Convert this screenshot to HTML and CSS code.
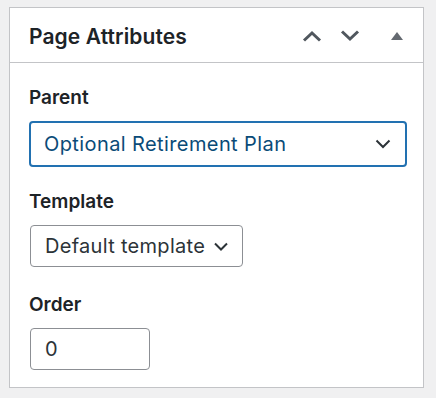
FILE: index.html
```html
<!DOCTYPE html>
<html lang="en">

<head>
    <meta charset="UTF-8">
    <meta name="viewport" content="width=device-width, initial-scale=1.0">
    <title>Page Attributes</title>
    <link rel="stylesheet" href="styles.css">
</head>

<body>
    <!-- Page Attributes box -->
    <div class="postbox">
        <div class="postbox-header">
            <h2 class="postbox-title">Page Attributes</h2>
            <div class="handle-actions">
                <button class="handle-btn move-up" aria-label="Move up">
                    <svg width="20" height="12" viewBox="0 0 20 12"><path d="M2 10.5 L10 3 L18 10.5" fill="none" stroke="#50575e" stroke-width="3"/></svg>
                </button>
                <button class="handle-btn move-down" aria-label="Move down">
                    <svg width="20" height="12" viewBox="0 0 20 12"><path d="M2 1.5 L10 9 L18 1.5" fill="none" stroke="#50575e" stroke-width="3"/></svg>
                </button>
                <button class="handle-btn toggle" aria-label="Toggle panel">
                    <svg width="12" height="8" viewBox="0 0 12 8"><path d="M0 8 L6 0 L12 8 Z" fill="#646970"/></svg>
                </button>
            </div>
        </div>

        <div class="inside">
            <p class="attr-label">Parent</p>
            <div class="fake-select select-focus">
                <span class="select-text">Optional Retirement Plan</span>
                <svg width="16" height="10" viewBox="0 0 16 10"><path d="M1.5 1.5 L8 8 L14.5 1.5" fill="none" stroke="#2c3338" stroke-width="2"/></svg>
            </div>

            <p class="attr-label">Template</p>
            <div class="fake-select select-small">
                <span class="select-text">Default template</span>
                <svg width="14" height="9" viewBox="0 0 14 9"><path d="M1 1.5 L7 7.5 L13 1.5" fill="none" stroke="#2c3338" stroke-width="2"/></svg>
            </div>

            <p class="attr-label order-label">Order</p>
            <input class="order-input" type="text" value="0">
        </div>
    </div>
</body>

</html>
```

FILE: styles.css
```css
/* Global Styles */
body {
    margin: 0;
    padding: 7px 12px 0 9px;
    font-family: Inter, "Noto Sans", sans-serif;
    background-color: #f0f0f1;
    color: #1d2327;
}

/* Box */
.postbox {
    background: #fff;
    border: 1px solid #c3c4c7;
    height: 379px;
}

.postbox-header {
    display: flex;
    align-items: center;
    justify-content: space-between;
    height: 54px;
    border-bottom: 1px solid #c3c4c7;
}

.postbox-title {
    margin: 0;
    padding: 3px 0 0 19px;
    font-size: 21px;
    font-weight: 600;
    letter-spacing: 0.1px;
}

.handle-actions {
    display: flex;
    align-items: center;
    padding: 2px 20px 0 0;
}

.handle-btn {
    display: flex;
    background: none;
    border: none;
    padding: 0;
    cursor: pointer;
}

.move-up {
    margin-right: 18px;
}

.move-down {
    margin-right: 31px;
}

/* Fields */
.inside {
    padding: 0 16px 0 19px;
}

.attr-label {
    margin: 22px 0 11px;
    font-size: 19px;
    line-height: 25px;
    font-weight: 600;
}

.order-label {
    margin-top: 25px;
}

.fake-select {
    display: flex;
    align-items: center;
    justify-content: space-between;
    box-sizing: border-box;
    border: 1px solid #8c8f94;
    border-radius: 4px;
    padding: 0 14px 0 14px;
    font-size: 20px;
    letter-spacing: 0.3px;
    color: #2c3338;
}

.select-focus {
    height: 46px;
    border: 2px solid #2271b1;
    padding-left: 13px;
    letter-spacing: 0.4px;
    color: #0a4b78;
}

.select-small {
    width: 213px;
    height: 42px;
    margin-left: 1px;
}

.order-input {
    display: block;
    box-sizing: border-box;
    width: 120px;
    height: 42px;
    margin-left: 1px;
    padding: 0 14px;
    border: 1px solid #8c8f94;
    border-radius: 4px;
    font-family: inherit;
    font-size: 20px;
    color: #2c3338;
}
```
